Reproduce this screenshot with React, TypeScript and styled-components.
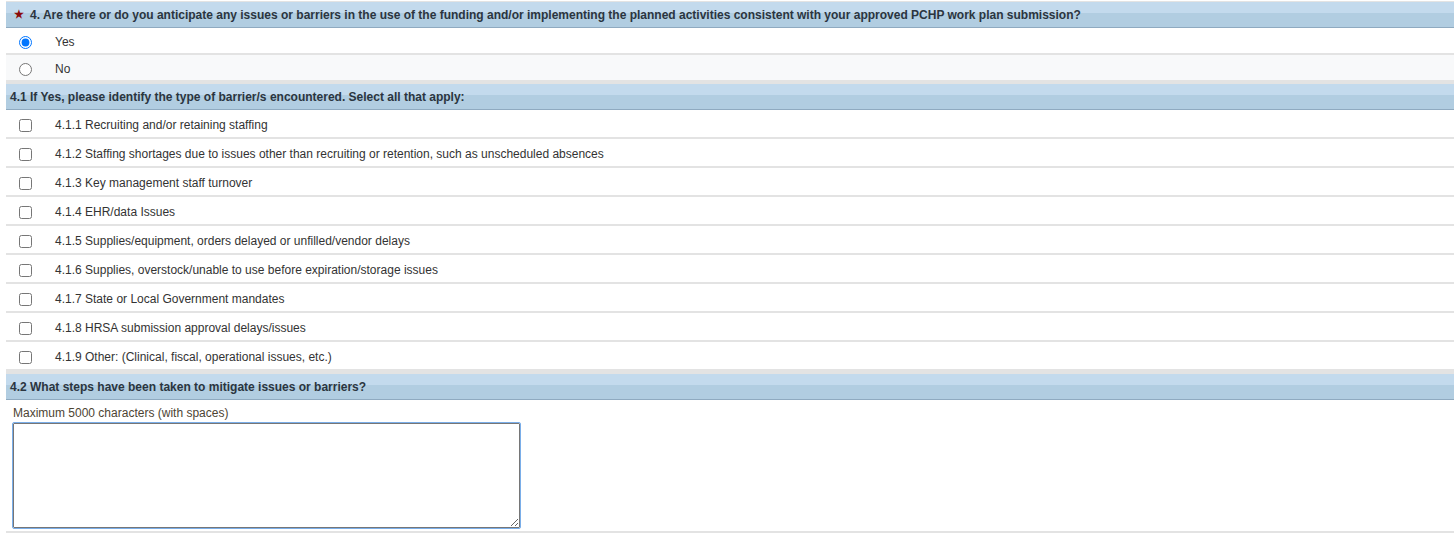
import React, { useState } from "react";
import styled, { createGlobalStyle } from "styled-components";

const GlobalStyle = createGlobalStyle`
  html, body {
    margin: 0;
    padding: 0;
    background: #ffffff;
    font-family: "Liberation Sans", Arial, sans-serif;
    font-size: 12px;
    color: #333333;
  }
`;

const Page = styled.div`
  padding: 1px 0 0 6px;
`;

const Section = styled.div`
  display: flex;
  flex-direction: column;
`;

const HeaderBar = styled.div<{ $top?: number }>`
  height: 25px;
  display: flex;
  align-items: center;
  gap: 6px;
  padding-left: 4px;
  background: linear-gradient(#c3daed 0, #c3daed 45%, #b1cde1 45%, #b1cde1 100%);
  border-top: ${(p) => p.$top ?? 1}px solid #e3e3e3;
  border-bottom: 1px solid #8faac0;
  font-weight: bold;
  font-size: 12px;
  color: #2b3540;
`;

const Star = styled.span`
  color: #8b0a0a;
  font-size: 11px;
  margin-left: 4px;
  line-height: 1;
`;

const OptionRow = styled.label<{ $alt?: boolean }>`
  box-sizing: border-box;
  display: flex;
  align-items: center;
  height: 27px;
  padding-top: 3px;
  background: ${(p) => (p.$alt ? "#f8f9fa" : "#ffffff")};
  border-bottom: 2px solid #e3e3e3;
  color: #333333;
  cursor: pointer;
`;

const CheckRow = styled(OptionRow)`
  height: 29px;
`;

const ControlCell = styled.span`
  width: 36px;
  display: flex;
  justify-content: center;
  margin-left: 1px;
  margin-right: 12px;
`;

const Radio = styled.input.attrs({ type: "radio" })`
  width: 13px;
  height: 13px;
  margin: 0;
  accent-color: #0075ff;
`;

const Checkbox = styled.input.attrs({ type: "checkbox" })`
  width: 13px;
  height: 13px;
  margin: 0;
`;

const Body = styled.div`
  padding: 6px 0 3px 7px;
  border-bottom: 2px solid #e3e3e3;
`;

const Hint = styled.div`
  color: #4d4433;
  font-size: 12px;
  margin-bottom: 3px;
`;

const TextArea = styled.textarea`
  display: block;
  width: 507px;
  height: 105px;
  box-sizing: border-box;
  border: 1px solid #767676;
  border-radius: 1px;
  outline: 1px solid #7aaee9;
  outline-offset: 0;
  font-family: "Liberation Sans", Arial, sans-serif;
  font-size: 12px;
  padding: 2px 3px;
  resize: both;
`;

const barriers = [
  "4.1.1 Recruiting and/or retaining staffing",
  "4.1.2 Staffing shortages due to issues other than recruiting or retention, such as unscheduled absences",
  "4.1.3 Key management staff turnover",
  "4.1.4 EHR/data Issues",
  "4.1.5 Supplies/equipment, orders delayed or unfilled/vendor delays",
  "4.1.6 Supplies, overstock/unable to use before expiration/storage issues",
  "4.1.7 State or Local Government mandates",
  "4.1.8 HRSA submission approval delays/issues",
  "4.1.9 Other: (Clinical, fiscal, operational issues, etc.)",
];

export default function App() {
  const [answer, setAnswer] = useState("yes");

  return (
    <>
      <GlobalStyle />
      <Page>
        <Section>
          <HeaderBar>
            <Star>★</Star>
            4. Are there or do you anticipate any issues or barriers in the use of the funding and/or
            implementing the planned activities consistent with your approved PCHP work plan submission?
          </HeaderBar>
          <OptionRow>
            <ControlCell>
              <Radio name="q4" checked={answer === "yes"} onChange={() => setAnswer("yes")} />
            </ControlCell>
            Yes
          </OptionRow>
          <OptionRow $alt>
            <ControlCell>
              <Radio name="q4" checked={answer === "no"} onChange={() => setAnswer("no")} />
            </ControlCell>
            No
          </OptionRow>
        </Section>

        <Section>
          <HeaderBar $top={2}>
            4.1 If Yes, please identify the type of barrier/s encountered. Select all that apply:
          </HeaderBar>
          {barriers.map((b) => (
            <CheckRow key={b}>
              <ControlCell>
                <Checkbox />
              </ControlCell>
              {b}
            </CheckRow>
          ))}
        </Section>

        <Section>
          <HeaderBar $top={3}>4.2 What steps have been taken to mitigate issues or barriers?</HeaderBar>
          <Body>
            <Hint>Maximum 5000 characters (with spaces)</Hint>
            <TextArea autoFocus />
          </Body>
        </Section>
      </Page>
    </>
  );
}
